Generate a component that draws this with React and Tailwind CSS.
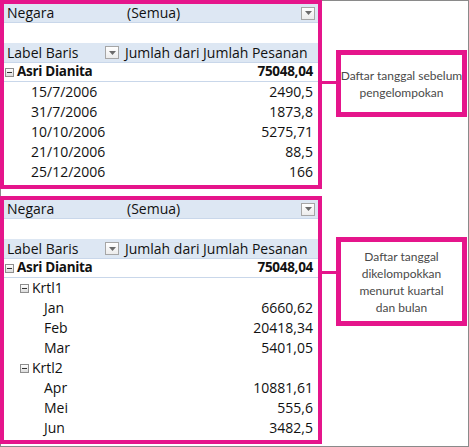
import React from "react";

const pink = "border-[#e5158b]";

function DropBtn() {
  return (
    <span className="flex h-[13px] w-[14px] items-center justify-center border border-[#a6a6a6] bg-gradient-to-b from-white to-[#ececec]">
      <svg width="7" height="4" viewBox="0 0 7 4">
        <path d="M0 0H7L3.5 4Z" fill="#6b6b6b" />
      </svg>
    </span>
  );
}

function MinusBox() {
  return (
    <span className="mr-[3px] flex h-[9px] w-[9px] items-center justify-center border border-[#8e8e8e] bg-gradient-to-b from-white to-[#dcdcdc]">
      <span className="h-px w-[5px] bg-[#333]" />
    </span>
  );
}

function PivotHead() {
  return (
    <>
      <div className="flex h-[19px] items-center border-b border-[#c9d7ea] bg-[#dde7f3]">
        <div className="w-[118px] pl-[3px]">Negara</div>
        <div className="flex-1 pl-[5px]">(Semua)</div>
        <div className="mr-[3px]">
          <DropBtn />
        </div>
      </div>
      <div className="h-[20px]" />
      <div className="flex h-[20px] items-center border-b border-[#c9d7ea] bg-[#dde7f3]">
        <div className="flex w-[118px] items-center pl-[3px]">
          <span>Label Baris</span>
          <span className="ml-auto mr-[3px]">
            <DropBtn />
          </span>
        </div>
        <div className="flex-1 whitespace-nowrap pl-[3px]">Jumlah dari Jumlah Pesanan</div>
      </div>
      <div className="flex h-[19px] items-center border-b border-[#c9d7ea] text-[13.5px] font-bold">
        <div className="flex w-[118px] items-center pl-[1px]">
          <MinusBox />
          <span className="tracking-[-0.3px]">Asri Dianita</span>
        </div>
        <div className="flex-1 pr-[5px] text-right tracking-[-0.3px]">75048,04</div>
      </div>
    </>
  );
}

function Row({ label, value, indent, group }) {
  return (
    <div className="flex h-[20px] items-center">
      <div className={`flex w-[118px] items-center ${indent}`}>
        {group && <MinusBox />}
        <span>{label}</span>
      </div>
      <div className="flex-1 pr-[5px] text-right">{value}</div>
    </div>
  );
}

function Callout({ lines, top, h }) {
  return (
    <div className="flex items-start">
      <div className={`h-[3px] w-[14px] bg-[#e5158b] ${top.line}`} />
      <div
        className={`flex w-[131px] flex-col items-center justify-center border-[5px] ${pink} ${top.box} ${h} whitespace-nowrap text-center font-['Lato',sans-serif] text-[12px] leading-[17px] text-[#4a4a4a]`}
      >
        {lines.map((l) => (
          <span key={l}>{l}</span>
        ))}
      </div>
    </div>
  );
}

const dates = [
  ["15/7/2006", "2490,5"],
  ["31/7/2006", "1873,8"],
  ["10/10/2006", "5275,71"],
  ["21/10/2006", "88,5"],
  ["25/12/2006", "166"],
];

export default function App() {
  return (
    <div className="h-[447px] w-[469px] bg-white shadow-[inset_0_0_0_1px_#8a8a8a] font-['Open_Sans',sans-serif] text-[14px] leading-none text-[#111]">
      <div className="flex items-start">
        <div className={`h-[189px] w-[322px] border-4 ${pink}`}>
          <PivotHead />
          {dates.map(([d, v]) => (
            <Row key={d} label={d} value={v} indent="pl-[27px]" />
          ))}
        </div>
        <Callout
          lines={["Daftar tanggal sebelum", "pengelompokan"]}
          top={{ line: "mt-[81px]", box: "mt-[50px]" }}
          h="h-[67px]"
        />
      </div>

      <div className="mt-[7px] flex items-start">
        <div className={`h-[248px] w-[322px] border-4 ${pink}`}>
          <PivotHead />
          <Row label="Krtl1" indent="pl-[16px]" group />
          <Row label="Jan" value="6660,62" indent="pl-[40px]" />
          <Row label="Feb" value="20418,34" indent="pl-[40px]" />
          <Row label="Mar" value="5401,05" indent="pl-[40px]" />
          <Row label="Krtl2" indent="pl-[16px]" group />
          <Row label="Apr" value="10881,61" indent="pl-[40px]" />
          <Row label="Mei" value="555,6" indent="pl-[40px]" />
          <Row label="Jun" value="3482,5" indent="pl-[40px]" />
        </div>
        <Callout
          lines={["Daftar tanggal", "dikelompokkan", "menurut kuartal", "dan bulan"]}
          top={{ line: "mt-[75px]", box: "mt-[41px]" }}
          h="h-[89px]"
        />
      </div>
    </div>
  );
}
